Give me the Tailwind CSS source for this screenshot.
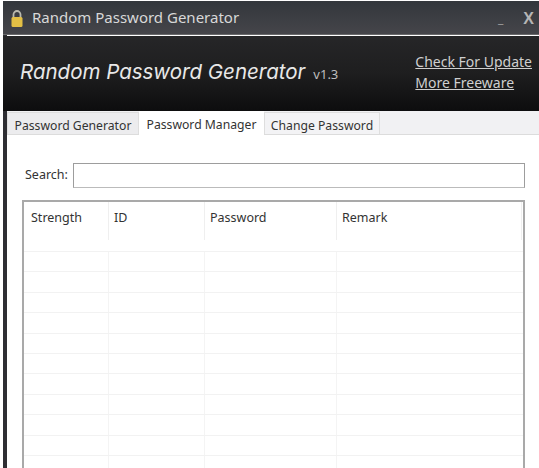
<!DOCTYPE html>
<html lang="en">
<head>
    <meta charset="UTF-8">
    <title>Random Password Generator</title>
    <script src="https://cdn.jsdelivr.net/npm/@tailwindcss/browser@4"></script>
</head>
<body class="bg-white overflow-hidden font-['Noto_Sans',sans-serif] text-[12px] text-[#333]">
    <div class="w-[539px] h-[468px] pl-[3px] pt-px overflow-hidden">
        <div class="h-full flex flex-col border-l-[4px] border-[#2e2e33]">
            <!-- title bar -->
            <div class="h-[34px] -ml-[4px] flex items-center pl-[7px] pr-[5px] bg-gradient-to-b from-[#33373c] to-[#45454a] border-b border-[#6a6a6c] shrink-0">
                <svg width="14" height="19" viewBox="0 0 14 19" class="shrink-0 mt-[2px]">
                    <path d="M3.5 9V5.5a3.5 3.5 0 0 1 7 0V9" fill="none" stroke="#b9b9ae" stroke-width="1.8"/>
                    <rect x="1.5" y="8" width="11" height="10" rx="1.5" fill="#e3bf45"/>
                </svg>
                <span class="ml-[8px] text-[15px] text-[#d8d8d8]">Random Password Generator</span>
                <span class="ml-auto -mr-px text-[#9a9a9a] font-bold text-[13px] leading-none mt-[2px]">_</span>
                <span class="ml-[21px] mt-[2px] text-[#b5b5b5] font-bold text-[16px] leading-none font-['Liberation_Sans',sans-serif]">X</span>
            </div>
            <!-- banner -->
            <div class="h-[75px] -ml-[4px] mt-px shrink-0 bg-gradient-to-b from-[#262628] via-[#1e1e1f] to-[#0d0d0e] flex items-center pl-[17px] pr-[7px]">
                <span class="italic text-[#e8e8e8] text-[20.5px] font-['Inter',sans-serif] -mt-[2px]">Random Password Generator</span>
                <span class="ml-[8px] mt-[3px] text-[#bdbdbd] text-[13px]">v1.3</span>
                <div class="ml-auto flex flex-col gap-[3px] text-[14px] leading-[18px] text-[#cfcfcf] -mt-[2px]">
                    <a class="underline" href="#">Check For Update</a>
                    <a class="underline" href="#">More Freeware</a>
                </div>
            </div>
            <!-- tabs -->
            <div class="h-[24px] shrink-0 flex items-end bg-[#f1f1f3] border-b border-[#dcdcdc] text-[12.2px] leading-[16px]">
                <div class="w-[132px] h-[22px] flex items-end justify-center bg-[#ececee] border border-b-0 border-[#dedede]">Password Generator</div>
                <div class="w-[125px] h-[24px] -mb-px flex items-center justify-center bg-white pt-[3px]">Password Manager</div>
                <div class="w-[116px] h-[22px] flex items-end justify-center bg-[#f3f3f5] border border-b-0 border-[#dedede]">Change Password</div>
            </div>
            <!-- page -->
            <div class="flex-1 bg-white pl-[15px] pr-[14px] pt-[28px]">
                <div class="flex items-center h-[25px]">
                    <label class="w-[51px] pl-[3px] text-[12.5px]">Search:</label>
                    <input class="w-[452px] h-[25px] bg-white border border-[#9d9d9d] border-b-[#bbb]">
                </div>
                <div class="mt-[12px] w-[503px] h-[281px] border-t-2 border-l-2 border-r-2 border-[#a9a9a9]">
                    <div class="grid grid-cols-[85px_96px_132px_185px] h-[50px] border-b border-[#f2f2f2] text-[12.5px]">
                        <div class="pl-[7px] pt-[7px] h-[38px] border-r border-[#efefef]">Strength</div>
                        <div class="pl-[5px] pt-[7px] h-[38px] border-r border-[#efefef]">ID</div>
                        <div class="pl-[5px] pt-[7px] h-[38px] border-r border-[#efefef]">Password</div>
                        <div class="pl-[5px] pt-[7px] h-[38px] border-r border-[#efefef]">Remark</div>
                    </div>
                    <div id="rows"></div>
                </div>
            </div>
        </div>
    </div>
    <script>
        const rows = document.getElementById("rows");
        for (let i = 0; i < 11; i++) {
            const row = document.createElement("div");
            row.className = "grid grid-cols-[85px_96px_132px_185px] h-[20.4px] border-b border-[#f2f2f2]";
            row.innerHTML = "<div class='border-r border-[#f4f4f4]'></div><div class='border-r border-[#f4f4f4]'></div><div class='border-r border-[#f4f4f4]'></div><div></div>";
            rows.appendChild(row);
        }
    </script>
</body>
</html>
